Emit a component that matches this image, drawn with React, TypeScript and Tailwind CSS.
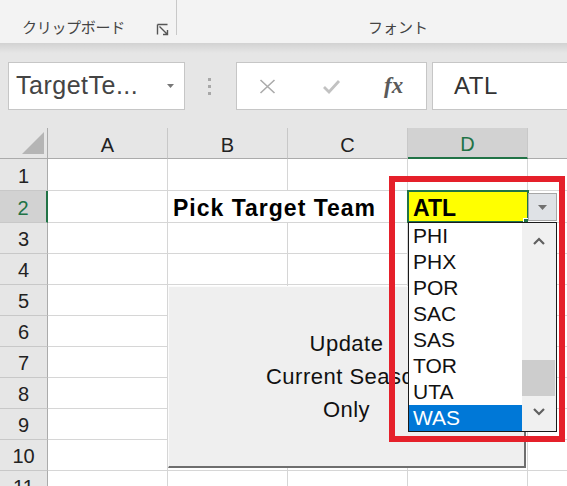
import React from 'react';

const cols = ['A', 'B', 'C', 'D', 'E'];
const teams = ['PHI', 'PHX', 'POR', 'SAC', 'SAS', 'TOR', 'UTA', 'WAS'];

const rows = [
  { n: 1, h: 'h-[32px]' },
  { n: 2, h: 'h-[32px]' },
  { n: 3, h: 'h-[31px]' },
  { n: 4, h: 'h-[31px]' },
  { n: 5, h: 'h-[31px]' },
  { n: 6, h: 'h-[31px]' },
  { n: 7, h: 'h-[31px]' },
  { n: 8, h: 'h-[31px]' },
  { n: 9, h: 'h-[31px]' },
  { n: 10, h: 'h-[31px]' },
  { n: 11, h: 'h-[31px]' },
];

const sans = "font-['Liberation_Sans','Noto_Sans',sans-serif]";

const Ribbon = () => (
  <div className="flex h-[43px] bg-[#f3f3f3] font-['Noto_Sans_CJK_JP',sans-serif] text-[15px] text-[#444]">
    <div className="flex w-[177px] items-start border-r border-[#c8c8c8] mb-[8px]">
      <span className="ml-[22px] mt-[16px] tracking-[-0.3px]">クリップボード</span>
      <svg className="ml-[31px] mt-[23px]" width="14" height="13" viewBox="0 0 14 13">
        <path d="M1.5 1.5h10M1.5 1.5v10M3.5 3.5l8 8M7 11.5h4.5v-4.5" fill="none" stroke="#555" strokeWidth="1.4" />
      </svg>
    </div>
    <div className="flex flex-1 items-start">
      <span className="ml-[191px] mt-[16px]">フォント</span>
    </div>
  </div>
);

const FormulaBar = () => (
  <div className="h-[85px] bg-[#e6e6e6]">
    <div className="h-[10px] bg-linear-to-b from-[#d2d2d2] to-[#e6e6e6]" />
    <div className={`flex mt-[9px] h-[48px] ${sans}`}>
      <div className="ml-[8px] flex w-[177px] items-center border border-[#c6c6c6] bg-white">
        <span className="ml-[7px] text-[25px] tracking-[0.5px] text-[#444]">TargetTe...</span>
        <svg className="ml-auto mr-[10px]" width="7" height="4" viewBox="0 0 7 4">
          <path d="M0 0h7L3.5 4z" fill="#777" />
        </svg>
      </div>
      <div className="ml-[23px] flex flex-col justify-center gap-[4px]">
        <div className="h-[3px] w-[3px] bg-[#a8a8a8]" />
        <div className="h-[3px] w-[3px] bg-[#a8a8a8]" />
        <div className="h-[3px] w-[3px] bg-[#a8a8a8]" />
      </div>
      <div className="ml-[25px] flex w-[191px] items-center border border-[#c6c6c6] bg-white">
        <svg className="ml-[22px]" width="17" height="15" viewBox="0 0 17 15">
          <path d="M1.5 1L15.5 14M15.5 1L1.5 14" stroke="#ababab" strokeWidth="1.6" />
        </svg>
        <svg className="ml-[46px]" width="19" height="15" viewBox="0 0 19 15">
          <path d="M2 8l5 5L17 2" fill="none" stroke="#c2c2c2" strokeWidth="2.8" />
        </svg>
        <span className="ml-[43px] font-['Liberation_Serif',serif] text-[23px] font-bold italic text-[#5a5a5a]">fx</span>
      </div>
      <div className="ml-[5px] flex flex-1 items-center border border-r-0 border-[#c6c6c6] bg-white">
        <span className="ml-[21px] text-[24px] tracking-[0.5px] text-[#333]">ATL</span>
      </div>
    </div>
  </div>
);

const HeaderRow = () => (
  <div className={`flex h-[31px] ${sans} text-[20px] text-[#222]`}>
    <div className="relative w-[48px] shrink-0 border-r border-b border-[#ababab] bg-[#e6e6e6]">
      <svg className="absolute left-[22px] top-[4px]" width="23" height="23" viewBox="0 0 23 23">
        <path d="M0 22L22 0V22z" fill="#b5b5b5" />
      </svg>
    </div>
    {cols.map((c) =>
      c === 'D' ? (
        <div key={c} className="flex w-[120px] shrink-0 items-center justify-center border-r border-b-2 border-r-[#c8c8c8] border-b-[#217346] bg-[#d2d2d2] pt-[3px] text-[#217346]">
          {c}
        </div>
      ) : (
        <div key={c} className="flex w-[120px] shrink-0 items-center justify-center border-r border-b border-r-[#c8c8c8] border-b-[#ababab] bg-[#e6e6e6] pt-[3px]">
          {c === 'E' ? null : c}
        </div>
      )
    )}
  </div>
);

const Row = ({ n, h }: { n: number; h: string }) => {
  const active = n === 2;
  return (
    <div className={`flex ${h} ${sans}`}>
      <div
        className={
          active
            ? 'flex w-[48px] shrink-0 items-center justify-center border-r-2 border-b border-r-[#217346] border-b-[#c8c8c8] bg-[#d2d2d2] pt-[2px] text-[20px] text-[#217346]'
            : 'flex w-[48px] shrink-0 items-center justify-center border-r border-b border-r-[#ababab] border-b-[#c8c8c8] bg-[#e6e6e6] pt-[2px] text-[20px] text-[#222]'
        }
      >
        {n}
      </div>
      {cols.map((c) => {
        if (active && c === 'B') {
          return (
            <div key={c} className="relative z-10 flex w-[120px] shrink-0 items-center border-b border-[#d6d6d6] pt-[3px]">
              <span className="ml-[5px] whitespace-nowrap text-[23px] font-bold tracking-[1px] text-black">Pick Target Team</span>
            </div>
          );
        }
        if (active && c === 'D') {
          return (
            <div key={c} className="flex w-[120px] shrink-0 items-center border-r border-b border-[#d6d6d6] bg-[#ffff00] pt-[3px]">
              <span className="ml-[5px] text-[23px] font-bold text-black">ATL</span>
            </div>
          );
        }
        return <div key={c} className="w-[120px] shrink-0 border-r border-b border-[#d6d6d6]" />;
      })}
    </div>
  );
};

const TeamList = () => (
  <div className={`absolute left-[408px] top-[94px] z-30 flex h-[210px] w-[149px] border border-[#1a1a1a] bg-white ${sans}`}>
    <div className="flex flex-1 flex-col">
      {teams.map((t) => (
        <div
          key={t}
          className={
            t === 'WAS'
              ? 'h-[26px] bg-[#0078d7] pl-[4px] text-[21px] leading-[26px] text-white'
              : 'h-[26px] pl-[4px] text-[21px] leading-[26px] text-[#111]'
          }
        >
          {t}
        </div>
      ))}
    </div>
    <div className="flex w-[34px] flex-col items-center bg-[#f0f0f0]">
      <svg className="mt-[14px]" width="12" height="8" viewBox="0 0 12 8">
        <path d="M1 7L6 2l5 5" fill="none" stroke="#606060" strokeWidth="2.2" />
      </svg>
      <div className="mt-[115px] h-[36px] w-[33px] self-start bg-[#cdcdcd]" />
      <svg className="mt-[12px]" width="12" height="8" viewBox="0 0 12 8">
        <path d="M1 1l5 5 5-5" fill="none" stroke="#606060" strokeWidth="2.2" />
      </svg>
    </div>
  </div>
);

export default function App() {
  return (
    <div className="relative h-[486px] w-[567px] overflow-hidden bg-white">
      <Ribbon />
      <FormulaBar />
      <div className="relative">
        <HeaderRow />
        {rows.map((r) => (
          <Row key={r.n} n={r.n} h={r.h} />
        ))}

        {/* form button over B5:D10 */}
        <div className={`absolute left-[168px] top-[158px] z-20 flex h-[182px] w-[358px] flex-col items-center justify-center border-t border-l border-b-2 border-r-2 border-t-[#fbfbfb] border-l-[#fbfbfb] border-b-[#6e6e6e] border-r-[#6e6e6e] bg-[#efefef] text-center text-[22px] leading-[33px] tracking-[0.5px] text-[#111] ${sans}`}>
          <span>Update</span>
          <span>Current Season</span>
          <span>Only</span>
        </div>

        {/* selected cell D2 */}
        <div className="absolute left-[407px] top-[62px] z-20 h-[33px] w-[122px] border-2 border-[#217346]" />
        <div className="absolute left-[523px] top-[90px] z-30 h-[6px] w-[6px] border border-white bg-[#217346]" />

        {/* validation dropdown */}
        <div className="absolute left-[528px] top-[65px] z-30 flex h-[28px] w-[29px] items-center justify-center border border-[#a6a6a6] bg-[#dfe2e6]">
          <svg width="9" height="5" viewBox="0 0 9 5">
            <path d="M0 0h9L4.5 5z" fill="#707070" />
          </svg>
        </div>
        <TeamList />

        <div className="absolute left-[389px] top-[48px] z-40 h-[266px] w-[176px] border-[6px] border-[#e5202a]" />
      </div>
    </div>
  );
}
